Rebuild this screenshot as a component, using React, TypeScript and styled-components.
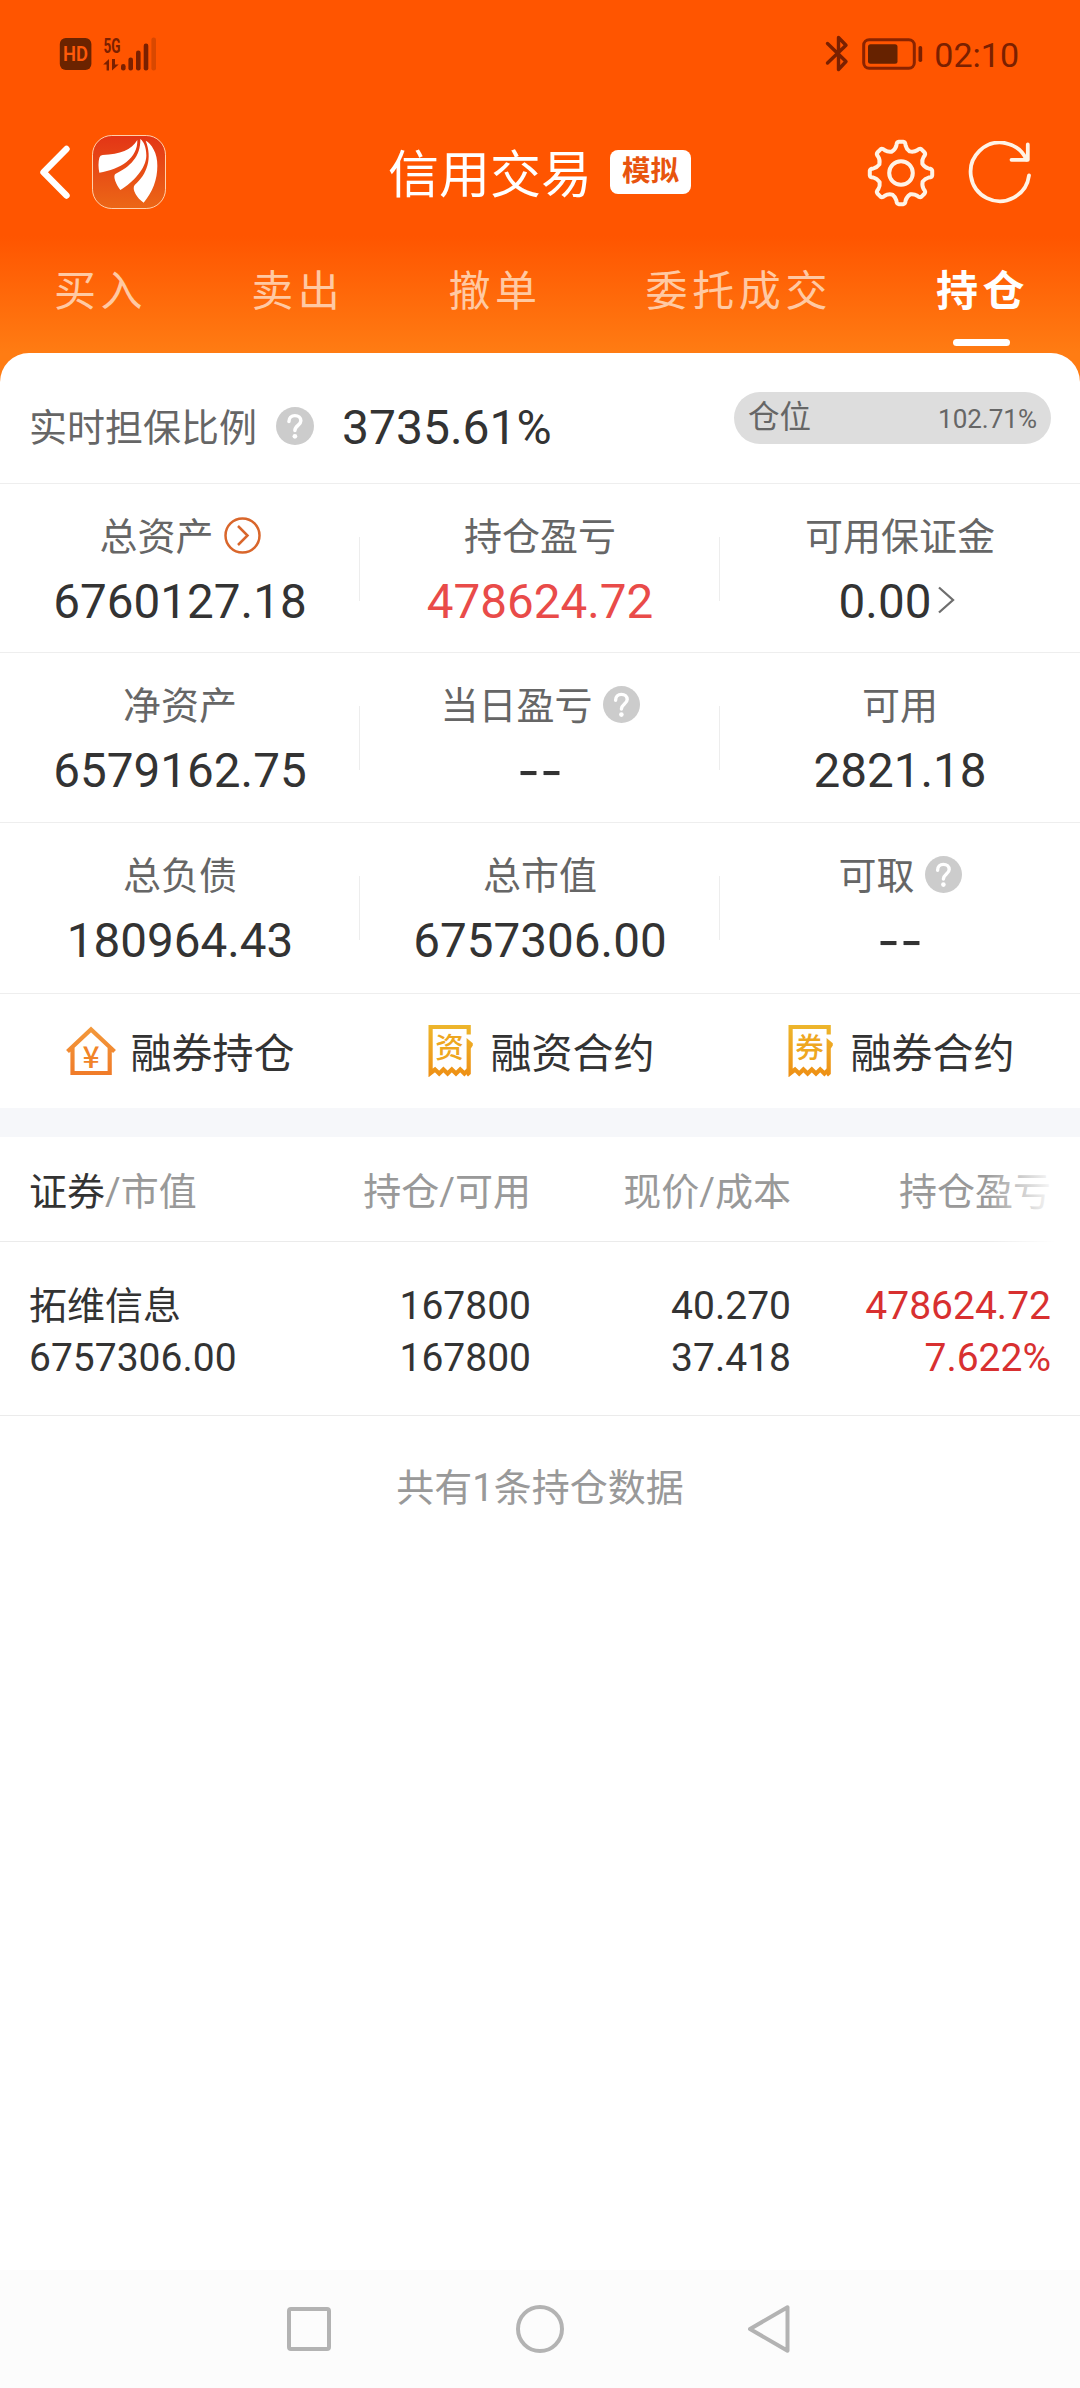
import React from "react";
import styled, { createGlobalStyle } from "styled-components";

const GlobalStyle = createGlobalStyle`
  *, *::before, *::after { box-sizing: border-box; }
  body {
    margin: 0;
    font-family: Roboto, "Noto Sans CJK SC", sans-serif;
    color: #333;
    background: #fff;
  }
  svg { display: block; flex: none; }
`;

const Screen = styled.div`
  width: 1080px;
  height: 2388px;
  display: flex;
  flex-direction: column;
  overflow: hidden;
  background: linear-gradient(180deg, #ff5500 0, #ff5500 236px, #ff7c13 353px, #ff7c13 100%);
`;

/* ---------- status bar ---------- */

const StatusBar = styled.div`
  height: 110px;
  padding: 0 61px 3px 59px;
  display: flex;
  align-items: center;
  justify-content: space-between;
  color: #7a2000;
`;

const StatusGroup = styled.div<{ $gap: number }>`
  display: flex;
  align-items: center;
  gap: ${(p) => p.$gap}px;
`;

const Clock = styled.span`
  font-size: 34px;
  line-height: 40px;
  padding-top: 2px;
`;

/* ---------- title bar ---------- */

const TitleBar = styled.header`
  height: 124px;
  padding: 0 48px 0 39px;
  display: grid;
  grid-template-columns: 1fr auto 1fr;
  align-items: center;
`;

const BarSide = styled.div<{ $end?: boolean }>`
  display: flex;
  align-items: center;
  gap: ${(p) => (p.$end ? 33 : 20)}px;
  justify-content: ${(p) => (p.$end ? "flex-end" : "flex-start")};
  padding-top: ${(p) => (p.$end ? 1 : 0)}px;
`;

const TitleGroup = styled.div`
  display: flex;
  align-items: center;
  gap: 18px;
  margin-left: 8px;
`;

const Title = styled.h1`
  margin: 0;
  padding-top: 8px;
  font-size: 51px;
  line-height: 64px;
  font-weight: 400;
  color: #fff;
`;

const Badge = styled.span`
  width: 81px;
  height: 44px;
  border-radius: 8px;
  background: #fff;
  color: #e8540e;
  font-size: 28.5px;
  line-height: 44px;
  font-weight: 700;
  text-align: center;
`;

/* ---------- tabs ---------- */

const Tabs = styled.nav`
  height: 119px;
  padding: 30px 0 0 54px;
  display: flex;
  gap: 104px;
`;

const Tab = styled.div<{ $active?: boolean }>`
  display: flex;
  flex-direction: column;
  align-items: center;
  font-size: 42px;
  line-height: 56px;
  letter-spacing: 4.6px;
  white-space: nowrap;
  font-weight: ${(p) => (p.$active ? 700 : 400)};
  color: ${(p) => (p.$active ? "#fff" : "#ffc9a3")};

  &::after {
    content: "";
    width: 57px;
    height: 7px;
    margin: 19px 3px 0 0;
    border-radius: 4px;
    background: ${(p) => (p.$active ? "#fff" : "transparent")};
  }
`;

/* ---------- sheet ---------- */

const Sheet = styled.main`
  flex: 1;
  background: #fff;
  border-radius: 29px 29px 0 0;
`;

const RatioRow = styled.section`
  height: 131px;
  padding: 0 29px;
  display: flex;
  align-items: center;
  justify-content: space-between;
  border-bottom: 1px solid #eee;
`;

const RatioGroup = styled.div`
  display: flex;
  align-items: center;
  padding-top: 20px;
`;

const RatioLabel = styled.span`
  font-size: 38px;
  line-height: 50px;
  color: #666;
  margin-right: 19px;
`;

const RatioValue = styled.span`
  font-size: 48px;
  line-height: 50px;
  margin-left: 28px;
`;

const Pill = styled.div`
  width: 317px;
  height: 52px;
  padding: 0 14px;
  border-radius: 26px;
  background: #ddd;
  color: #666;
  display: flex;
  align-items: center;
  justify-content: space-between;
  font-size: 31.5px;
  line-height: 50px;
`;

const PillValue = styled.span`
  font-size: 26px;
  padding-top: 2px;
`;

const StatRow = styled.section<{ $height: number }>`
  height: ${(p) => p.$height}px;
  display: grid;
  grid-template-columns: repeat(3, 1fr);
  border-bottom: 1px solid #eee;
`;

const Stat = styled.div`
  padding-top: 28px;
  display: flex;
  flex-direction: column;
  align-items: center;
  gap: 15px;
  background: linear-gradient(#ededed, #ededed) no-repeat 100% 53px / 1px 64px;

  &:last-child {
    background: none;
  }
`;

const StatLabel = styled.div`
  height: 50px;
  display: flex;
  align-items: center;
  gap: 10px;
  font-size: 38px;
  line-height: 50px;
  color: #666;
`;

const StatValue = styled.div<{ $red?: boolean; $empty?: boolean }>`
  height: 50px;
  display: flex;
  align-items: center;
  gap: 6px;
  font-size: ${(p) => (p.$empty ? 50 : 47.6)}px;
  line-height: 50px;
  font-family: ${(p) => (p.$empty ? "Inter, sans-serif" : "inherit")};
  color: ${(p) => (p.$red ? "#e94b49" : "#333")};
`;

const RaisedIcon = styled.span`
  margin-bottom: 4px;
`;

const Actions = styled.section`
  height: 114px;
  display: grid;
  grid-template-columns: repeat(3, 1fr);
`;

const Action = styled.div`
  display: flex;
  align-items: center;
  justify-content: center;
  gap: 14px;
  padding-right: 1px;
`;

const ActionText = styled.span`
  font-size: 41px;
  line-height: 50px;
  padding-top: 6px;
`;

const Band = styled.div`
  height: 29px;
  background: #f6f7fa;
`;

/* ---------- holdings table ---------- */

const TableRow = styled.div<{ $head?: boolean }>`
  position: relative;
  height: ${(p) => (p.$head ? 105 : 174)}px;
  padding: ${(p) => (p.$head ? 30 : 38)}px 29px 0 29px;
  display: grid;
  grid-template-columns: 1fr repeat(3, 260px);
  border-bottom: 1px solid #ebebeb;
  font-size: 38px;
  line-height: ${(p) => (p.$head ? 50 : 52)}px;
  color: ${(p) => (p.$head ? "#999" : "#333")};
`;

const EdgeFade = styled.span`
  position: absolute;
  top: 0;
  right: 0;
  width: 95px;
  height: 105px;
  background: linear-gradient(90deg, rgba(255, 255, 255, 0), #fff 75%);
`;

const Cell = styled.div<{ $right?: boolean; $red?: boolean }>`
  display: flex;
  flex-direction: column;
  align-items: ${(p) => (p.$right ? "flex-end" : "flex-start")};
  color: ${(p) => (p.$red ? "#d83030" : "inherit")};
  white-space: nowrap;
`;

const Figure = styled.span`
  font-size: 39px;
`;

const Strong = styled.span`
  color: #333;
`;

const Summary = styled.p`
  margin: 46px 0 0;
  font-size: 38px;
  line-height: 52px;
  text-align: center;
  color: #999;
`;

/* ---------- system navigation ---------- */

const NavBar = styled.footer`
  height: 118px;
  display: grid;
  grid-template-columns: repeat(3, 231px);
  justify-content: center;
  align-items: center;
  justify-items: center;
  background: #fcfcfc;
`;

/* ---------- icons ---------- */

const HdIcon = () => (
  <svg width="33" height="34" viewBox="0 0 33 34">
    <rect x="0.8" y="1" width="31.6" height="32" rx="6" fill="#6b2300" />
    <text
      x="16.6"
      y="24"
      textAnchor="middle"
      fontSize="19.5"
      fontWeight="600"
      fill="#ff5a0a"
      textLength="25"
      lengthAdjust="spacingAndGlyphs"
    >
      HD
    </text>
  </svg>
);

const bars = [
  { x: 23.3, top: 30, color: "#7a2000" },
  { x: 30.7, top: 23.5, color: "#7a2000" },
  { x: 38.3, top: 16.5, color: "#7a2000" },
  { x: 46, top: 9.5, color: "#7a2000" },
  { x: 53.7, top: 3.5, color: "#d94800" },
];

const SignalIcon = () => (
  <svg width="57" height="40" viewBox="0 0 57 40">
    <text x="3.4" y="18.6" fontSize="20" fontWeight="700" fill="#7a2000" textLength="17" lengthAdjust="spacingAndGlyphs">
      5G
    </text>
    <path d="M9 36.5V25L3.2 30.5H6.6V36.5ZM12 25V36.5L18.7 30.6H15V25Z" fill="#7a2000" />
    {bars.map((b) => (
      <rect key={b.x} x={b.x - 2.3} y={b.top} width="4.6" height={36.5 - b.top} rx="2.2" fill={b.color} />
    ))}
  </svg>
);

const BluetoothIcon = () => (
  <svg width="24" height="37" viewBox="0 0 24 37" fill="none" stroke="#7a2000" strokeWidth="3.4" strokeLinecap="round" strokeLinejoin="round">
    <path d="M2.5 8.5L21 26.5L13.5 34.5V2.5L21 10.2L2.5 28" />
  </svg>
);

const BatteryIcon = () => (
  <svg width="62" height="34" viewBox="0 0 62 34">
    <rect x="2.7" y="2.7" width="50.6" height="28.6" rx="5.5" fill="none" stroke="#8a2400" strokeWidth="3" />
    <rect x="7" y="7.2" width="29.5" height="19.6" rx="2.5" fill="#662200" />
    <rect x="57.5" y="9" width="3.7" height="16" rx="1.8" fill="#7a2000" />
  </svg>
);

const BackIcon = () => (
  <svg width="33" height="56" viewBox="0 0 33 56" fill="none" stroke="#fff" strokeWidth="6.4" strokeLinecap="round" strokeLinejoin="round">
    <path d="M27.5 5L4.5 28.3L27.5 51.5" />
  </svg>
);

const BrandIcon = () => (
  <svg width="74" height="74" viewBox="0 0 222 222">
    <defs>
      <linearGradient id="brand" x1="0" y1="0" x2="0" y2="1">
        <stop offset="0" stopColor="#e33516" />
        <stop offset="1" stopColor="#ec6716" />
      </linearGradient>
    </defs>
    <rect x="1.5" y="1.5" width="219" height="219" rx="58" fill="url(#brand)" stroke="#ffd0aa" strokeWidth="3" />
    <g fill="#fff">
      <path d="M22 113Q17 88 22 68Q24 61 32 60C85 58 118 45 136 15C138 70 85 103 22 113Z" />
      <path d="M85 165C72 148 62 124 70 117C115 95 146 65 145 12C155 20 163 35 163 62C162 100 125 140 85 165Z" />
      <path d="M155 203C135 190 118 163 128 150C165 118 182 70 161 17C178 25 197 55 196 92C196 135 182 170 155 203Z" />
    </g>
  </svg>
);

const gearPath = (() => {
  const at = (k: number, r: number, t: number) => {
    const a = (k * Math.PI) / 4;
    return `${(34 + r * Math.cos(a) - t * Math.sin(a)).toFixed(2)} ${(34 + r * Math.sin(a) + t * Math.cos(a)).toFixed(2)}`;
  };
  let d = "";
  for (let k = 0; k < 8; k++) {
    d += `${k === 0 ? "M" : "L"}${at(k, 27.5, -4.6)}`;
    d += `Q${at(k, 31, -4.4)} ${at(k, 31.2, -2.2)}L${at(k, 31.2, 2.2)}Q${at(k, 31, 4.4)} ${at(k, 27.5, 4.6)}`;
    d += `Q${at(k, 24, 5.4)} ${at(k, 21.6, 8.6)}`;
    d += `Q${at(k + 1, 24, -5.4)} ${at(k + 1, 27.5, -4.6)}`;
  }
  return d + "Z";
})();

const GearIcon = () => (
  <svg width="68" height="68" viewBox="0 0 68 68" fill="none" stroke="#fff3e6" strokeWidth="4" strokeLinejoin="round">
    <path d={gearPath} />
    <circle cx="34" cy="34" r="11.8" />
  </svg>
);

const RefreshIcon = () => (
  <svg width="64" height="64" viewBox="0 0 64 64" fill="none" stroke="#fff3e6" strokeWidth="3.8" strokeLinecap="round" strokeLinejoin="round">
    <path d="M61 34.5A29.3 29.3 0 1 1 58.5 18.5" />
    <path d="M59.8 3.5V18.8H43.5" />
  </svg>
);

const HelpIcon = ({ size = 37 }: { size?: number }) => (
  <svg width={size} height={size} viewBox="0 0 37 37">
    <circle cx="18.5" cy="18.5" r="18.5" fill="#ccc" />
    <path
      d="M12.6 14.2C12.6 10.6 15 8.4 18.4 8.4C21.8 8.4 24.2 10.5 24.2 13.5C24.2 17.8 18.4 18.2 18.4 23"
      fill="none"
      stroke="#fff"
      strokeWidth="3.4"
      strokeLinecap="round"
    />
    <circle cx="18.4" cy="28.6" r="2.3" fill="#fff" />
  </svg>
);

const CircleArrowIcon = () => (
  <svg width="37" height="37" viewBox="0 0 37 37" fill="none" stroke="#d9662b" strokeWidth="2.5">
    <circle cx="18.5" cy="18.5" r="17" />
    <path d="M14 9L23.5 18.5L14 28" />
  </svg>
);

const ChevronIcon = () => (
  <svg width="24" height="28" viewBox="0 0 24 28" fill="none" stroke="#6e6e6e" strokeWidth="2.3">
    <path d="M2 1.5L16 14L2 26.5" />
  </svg>
);

const HouseIcon = () => (
  <svg width="52" height="52" viewBox="0 0 52 52">
    <defs>
      <linearGradient id="house" gradientUnits="userSpaceOnUse" x1="0" y1="0" x2="0" y2="52">
        <stop offset="0" stopColor="#f39a3c" />
        <stop offset="1" stopColor="#f07a28" />
      </linearGradient>
    </defs>
    <path
      d="M2.5 26.5L26 4.5L49.5 26.5M7.5 22.5V48H44.7V22.5"
      fill="none"
      stroke="url(#house)"
      strokeWidth="4.2"
    />
    <text
      x="26"
      y="42.5"
      textAnchor="middle"
      fontSize="30"
      fontWeight="500"
      fill="#f18429"
      fontFamily="'Noto Sans CJK SC', sans-serif"
    >
      ¥
    </text>
  </svg>
);

const ReceiptIcon = ({ glyph }: { glyph: string }) => (
  <svg width="52" height="52" viewBox="0 0 52 52">
    <defs>
      <linearGradient id="receipt" gradientUnits="userSpaceOnUse" x1="0" y1="0" x2="0" y2="52">
        <stop offset="0" stopColor="#edb62c" />
        <stop offset="1" stopColor="#ee8f14" />
      </linearGradient>
    </defs>
    <path
      d="M43.7 9.5V2H5.6V48L10 44.5L14.2 48.5L18.4 44.5L22.6 48.5L26.8 44.5L31 48.5L35.2 44.5L39.4 48.5L43.7 44.5"
      fill="none"
      stroke="url(#receipt)"
      strokeWidth="4.2"
    />
    <path d="M41.6 13L47.8 18.2V20.5L45.8 23.5V49L43 51.5L41.6 50Z" fill="url(#receipt)" />
    <text
      x="24.6"
      y="32.8"
      textAnchor="middle"
      fontSize="28.5"
      fontWeight="500"
      fill="#eea71f"
      fontFamily="'Noto Sans CJK SC', sans-serif"
    >
      {glyph}
    </text>
  </svg>
);

const navStroke = { fill: "none", stroke: "#b3b3b3", strokeWidth: 4, strokeLinejoin: "round" as const };

/* ---------- data ---------- */

type StatItem = { label: string; value: string; red?: boolean; help?: boolean; more?: boolean; link?: boolean };

const stats: { height: number; items: StatItem[] }[] = [
  {
    height: 169,
    items: [
      { label: "总资产", value: "6760127.18", link: true },
      { label: "持仓盈亏", value: "478624.72", red: true },
      { label: "可用保证金", value: "0.00", more: true },
    ],
  },
  {
    height: 170,
    items: [
      { label: "净资产", value: "6579162.75" },
      { label: "当日盈亏", value: "--", help: true },
      { label: "可用", value: "2821.18" },
    ],
  },
  {
    height: 171,
    items: [
      { label: "总负债", value: "180964.43" },
      { label: "总市值", value: "6757306.00" },
      { label: "可取", value: "--", help: true },
    ],
  },
];

const tabs = ["买入", "卖出", "撤单", "委托成交", "持仓"];

export default function App() {
  return (
    <Screen>
      <GlobalStyle />
      <StatusBar>
        <StatusGroup $gap={8}>
          <HdIcon />
          <SignalIcon />
        </StatusGroup>
        <StatusGroup $gap={11.5}>
          <BluetoothIcon />
          <BatteryIcon />
          <Clock>02:10</Clock>
        </StatusGroup>
      </StatusBar>

      <TitleBar>
        <BarSide>
          <BackIcon />
          <BrandIcon />
        </BarSide>
        <TitleGroup>
          <Title>信用交易</Title>
          <Badge>模拟</Badge>
        </TitleGroup>
        <BarSide $end>
          <GearIcon />
          <RefreshIcon />
        </BarSide>
      </TitleBar>

      <Tabs>
        {tabs.map((t) => (
          <Tab key={t} $active={t === "持仓"}>
            {t}
          </Tab>
        ))}
      </Tabs>

      <Sheet>
        <RatioRow>
          <RatioGroup>
            <RatioLabel>实时担保比例</RatioLabel>
            <RaisedIcon>
              <HelpIcon size={38} />
            </RaisedIcon>
            <RatioValue>3735.61%</RatioValue>
          </RatioGroup>
          <Pill>
            <span>仓位</span>
            <PillValue>102.71%</PillValue>
          </Pill>
        </RatioRow>

        {stats.map((row) => (
          <StatRow key={row.height} $height={row.height}>
            {row.items.map((s) => (
              <Stat key={s.label}>
                <StatLabel>
                  {s.label}
                  {s.help && (
                    <RaisedIcon>
                      <HelpIcon />
                    </RaisedIcon>
                  )}
                  {s.link && (
                    <RaisedIcon>
                      <CircleArrowIcon />
                    </RaisedIcon>
                  )}
                </StatLabel>
                <StatValue $red={s.red} $empty={s.value === "--"}>
                  {s.value}
                  {s.more && (
                    <RaisedIcon>
                      <ChevronIcon />
                    </RaisedIcon>
                  )}
                </StatValue>
              </Stat>
            ))}
          </StatRow>
        ))}

        <Actions>
          <Action>
            <HouseIcon />
            <ActionText>融券持仓</ActionText>
          </Action>
          <Action>
            <ReceiptIcon glyph="资" />
            <ActionText>融资合约</ActionText>
          </Action>
          <Action>
            <ReceiptIcon glyph="券" />
            <ActionText>融券合约</ActionText>
          </Action>
        </Actions>

        <Band />

        <TableRow $head>
          <div>
            <Strong>证券</Strong>/市值
          </div>
          <Cell $right>持仓/可用</Cell>
          <Cell $right>现价/成本</Cell>
          <Cell $right>持仓盈亏</Cell>
          <EdgeFade />
        </TableRow>
        <TableRow>
          <Cell>
            <span>拓维信息</span>
            <Figure>6757306.00</Figure>
          </Cell>
          <Cell $right>
            <Figure>167800</Figure>
            <Figure>167800</Figure>
          </Cell>
          <Cell $right>
            <Figure>40.270</Figure>
            <Figure>37.418</Figure>
          </Cell>
          <Cell $right $red>
            <Figure>478624.72</Figure>
            <Figure>7.622%</Figure>
          </Cell>
        </TableRow>

        <Summary>共有1条持仓数据</Summary>
      </Sheet>

      <NavBar>
        <svg width="44" height="44" viewBox="0 0 44 44" {...navStroke}>
          <rect x="2" y="2" width="40" height="40" rx="2" />
        </svg>
        <svg width="48" height="48" viewBox="0 0 48 48" {...navStroke}>
          <circle cx="24" cy="24" r="22" />
        </svg>
        <svg width="46" height="48" viewBox="0 0 46 48" {...navStroke}>
          <path d="M2 24L39.5 2.3V45.7Z" />
        </svg>
      </NavBar>
    </Screen>
  );
}
